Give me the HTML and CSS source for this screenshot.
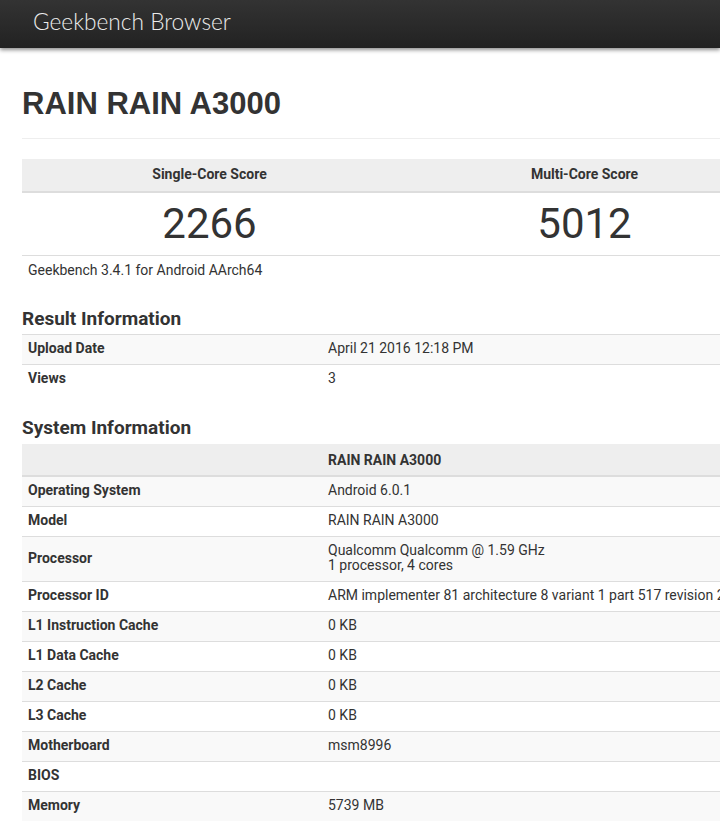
FILE: index.html
```html
<!DOCTYPE html>
<html>
<head>
<meta charset="utf-8">
<title>RAIN RAIN A3000 - Geekbench Browser</title>
<link rel="stylesheet" href="styles.css">
</head>
<body>
<header class="navbar">
  <span class="brand">Geekbench Browser</span>
</header>
<main class="container">
  <h1 class="page-title">RAIN RAIN A3000</h1>
  <table class="scores">
    <thead>
      <tr><th>Single-Core Score</th><th>Multi-Core Score</th></tr>
    </thead>
    <tbody>
      <tr><td>2266</td><td>5012</td></tr>
    </tbody>
  </table>
  <div class="version">Geekbench 3.4.1 for Android AArch64</div>

  <h3 class="section-title">Result Information</h3>
  <table class="info">
    <tbody>
      <tr><th class="name">Upload Date</th><td class="value">April 21 2016 12:18 PM</td></tr>
      <tr><th class="name">Views</th><td class="value">3</td></tr>
    </tbody>
  </table>

  <h3 class="section-title sys">System Information</h3>
  <table class="info">
    <thead>
      <tr><th class="name"></th><th class="head-value">RAIN RAIN A3000</th></tr>
    </thead>
    <tbody>
      <tr><th class="name">Operating System</th><td class="value">Android 6.0.1</td></tr>
      <tr><th class="name">Model</th><td class="value">RAIN RAIN A3000</td></tr>
      <tr><th class="name">Processor</th><td class="value">Qualcomm Qualcomm @ 1.59 GHz<br>1 processor, 4 cores</td></tr>
      <tr><th class="name">Processor ID</th><td class="value">ARM implementer 81 architecture 8 variant 1 part 517 revision 2</td></tr>
      <tr><th class="name">L1 Instruction Cache</th><td class="value">0 KB</td></tr>
      <tr><th class="name">L1 Data Cache</th><td class="value">0 KB</td></tr>
      <tr><th class="name">L2 Cache</th><td class="value">0 KB</td></tr>
      <tr><th class="name">L3 Cache</th><td class="value">0 KB</td></tr>
      <tr><th class="name">Motherboard</th><td class="value">msm8996</td></tr>
      <tr><th class="name">BIOS</th><td class="value"></td></tr>
      <tr><th class="name">Memory</th><td class="value">5739 MB</td></tr>
    </tbody>
  </table>
</main>
</body>
</html>
```

FILE: styles.css
```css
html, body {
  margin: 0;
  padding: 0;
  background: #fff;
  overflow-x: hidden;
}

body {
  font-family: Roboto, "Liberation Sans", sans-serif;
  font-size: 14px;
  color: #333;
}

.navbar {
  height: 48px;
  background: linear-gradient(#333333, #222222);
  box-shadow: 0 2px 4px rgba(0, 0, 0, 0.45);
  display: flex;
  align-items: center;
  padding-left: 33px;
}

.brand {
  font-family: Lato, "Open Sans", sans-serif;
  font-weight: 300;
  font-size: 22.7px;
  color: #ececec;
  line-height: 26px;
  margin-top: -5px;
}

.container {
  margin-left: 22px;
  width: 750px;
}

.page-title {
  font-family: "Liberation Sans", Arial, sans-serif;
  font-weight: bold;
  font-size: 31px;
  line-height: 36px;
  margin: 38px 0 0 0;
  padding-bottom: 16px;
  border-bottom: 1px solid #eee;
  width: 800px;
}

table {
  border-collapse: collapse;
  width: 750px;
}

.scores {
  margin-top: 20px;
  table-layout: fixed;
}

.scores th {
  background: #eee;
  font-weight: bold;
  font-size: 14px;
  line-height: 16px;
  padding: 7px 6px 9px;
  text-align: center;
  border-bottom: 2px solid #ddd;
}

.scores td {
  font-size: 42px;
  line-height: 46px;
  padding: 8px 6px;
  text-align: center;
  border-bottom: 1px solid #ddd;
}

.version {
  line-height: 16px;
  padding: 6px 6px 0;
}

.section-title {
  font-size: 19px;
  font-weight: bold;
  line-height: 20px;
  margin: 31px 0 5px 0;
}

.section-title.sys {
  margin-top: 24px;
  margin-bottom: 6px;
}

.info {
  table-layout: fixed;
}

.info th, .info td {
  text-align: left;
  line-height: 15px;
  padding: 6px 6px 8px;
  vertical-align: middle;
  white-space: nowrap;
}

.info tbody tr {
  border-top: 1px solid #ddd;
}

.info tbody tr:nth-child(odd) {
  background: #f9f9f9;
}

.info .name {
  width: 288px;
  font-weight: bold;
}

.info .value {
  font-weight: normal;
}

.info thead th {
  background: #eee;
  font-weight: bold;
  padding: 8px 6px 7px;
  line-height: 16px;
  border-bottom: 2px solid #ddd;
}

.info thead + tbody tr:first-child {
  border-top: none;
}
```
